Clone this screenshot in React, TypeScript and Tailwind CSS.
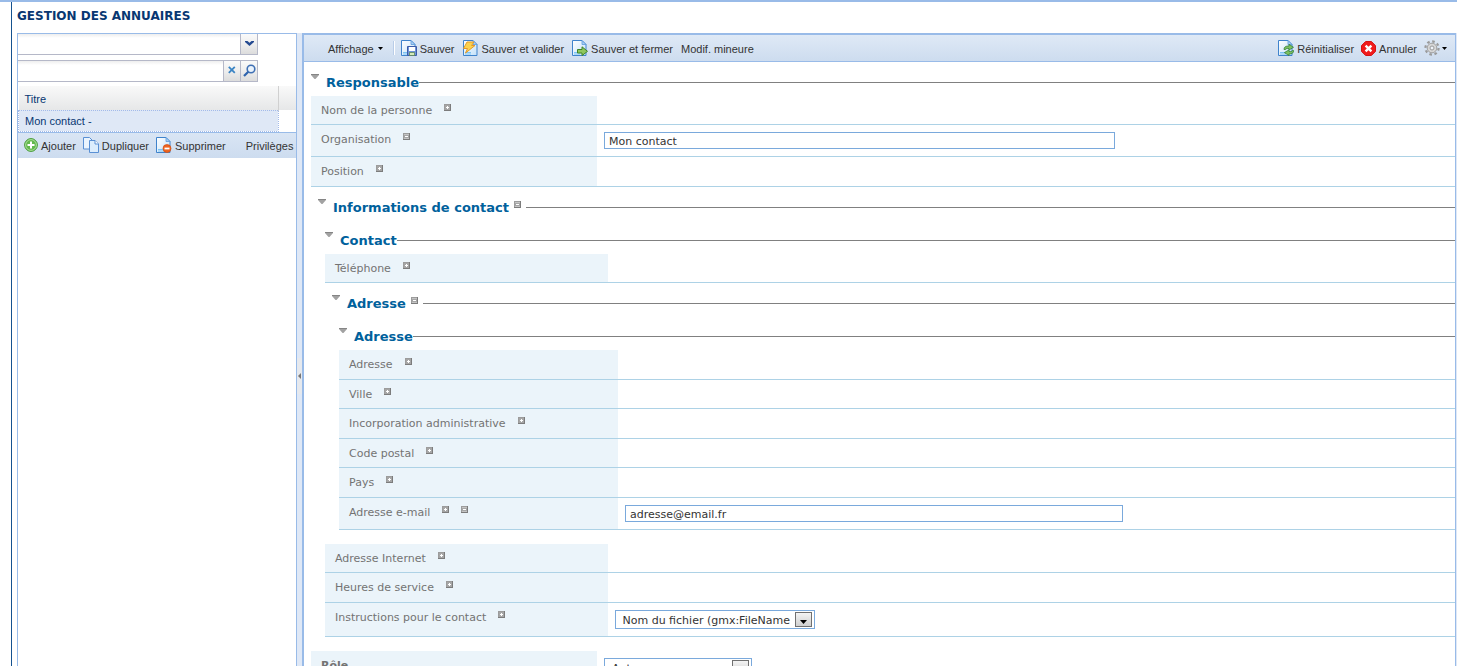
import type { ReactNode } from "react";

const verdana = "font-['Verdana','DejaVu_Sans',sans-serif]";
const arial = "font-['Liberation_Sans',Arial,sans-serif]";

function Page({ children }: { children?: ReactNode }) {
  return (
    <svg width="16" height="16" viewBox="0 0 16 16" className="shrink-0" aria-hidden="true">
      <defs>
        <linearGradient id="page" x1="0" y1="0" x2="1" y2="1">
          <stop offset="0" stopColor="#ffffff" />
          <stop offset="1" stopColor="#c3e1f9" />
        </linearGradient>
      </defs>
      <path d="M.5 .5h9.500l4 4v11H.5z" fill="url(#page)" stroke="#3f83cc" />
      <path d="M10 .5v4h4z" fill="#a9cff3" stroke="#5e9bdc" strokeWidth=".8" />
      <path d="M2 12.500h6M2 14h6" stroke="#7cc4f4" />
      {children}
    </svg>
  );
}

const SaveIcon = () => (
  <Page>
    <path d="M6.500 6.500h9v9h-9z" fill="#6f93d8" stroke="#3b5ba8" />
    <path d="M8 7h6v4H8z" fill="#fff" />
    <path d="M8.500 12.500h5v3h-5z" fill="#d5ecb9" stroke="#54804e" strokeWidth=".7" />
  </Page>
);

const ValidateIcon = () => (
  <Page>
    <path d="M4 2h7L8.500 5.500H12L2.500 13 4.500 8.500H.5z" fill="#fcd24e" stroke="#e39a2b" strokeWidth="1" />
  </Page>
);

const CloseSaveIcon = () => (
  <Page>
    <path d="M5.500 9.500h4.500V6.800l5.500 4.500-5.500 4.300v-2.600H5.500z" fill="#8fc75c" stroke="#3f8426" strokeWidth="1" />
  </Page>
);

const ResetIcon = () => (
  <Page>
    <path d="M6 9.500c0-2.500 1.500-3.500 5-3.500V4.300L15.500 7.300 11 10V8.500c-2 0-3 0-3.500 1z" fill="#7cc060" stroke="#348039" strokeWidth=".8" />
    <path d="M15.600 10.500c0 2.500-1.500 3.500-4.600 3.500v1.600l-4.600-3 4.600-2.700v1.600c2 0 3 0 3.500-1z" fill="#7cc060" stroke="#348039" strokeWidth=".8" />
  </Page>
);

const RemoveIcon = () => (
  <Page>
    <circle cx="11" cy="11.500" r="4" fill="#ee6420" stroke="#d04d12" strokeWidth=".7" />
    <path d="M8.500 11.500h5" stroke="#fff" strokeWidth="1.800" />
  </Page>
);

const AddIcon = () => (
  <svg width="14" height="14" viewBox="0 0 14 14" className="shrink-0" aria-hidden="true">
    <circle cx="7" cy="7" r="6.400" fill="#62b84d" stroke="#4a9c3c" />
    <circle cx="7" cy="7" r="5.400" fill="none" stroke="#b4e2a3" strokeWidth=".9" />
    <path d="M7 3.500v7M3.500 7h7" stroke="#fff" strokeWidth="2" />
  </svg>
);

const CopyIcon = () => (
  <svg width="16" height="16" viewBox="0 0 16 16" className="shrink-0" aria-hidden="true">
    <path d="M.5 .5h6l3 3v8.500h-9z" fill="#eaf4fe" stroke="#5a90d4" />
    <path d="M6.500 3.500h5.500l3.500 3.500v8.500h-9z" fill="#dcedfd" stroke="#5a90d4" />
    <path d="M12 3.500v3.500h3.500" fill="#fff" stroke="#5a90d4" />
  </svg>
);

const CancelIcon = () => (
  <svg width="15" height="15" viewBox="0 0 15 15" className="shrink-0" aria-hidden="true">
    <path d="M4.600.5h5.800l4.100 4.100v5.800l-4.100 4.100H4.600L.5 10.400V4.600z" fill="#f01c1c" stroke="#d41414" />
    <path d="M4.600 4.600l5.800 5.800M10.400 4.600l-5.800 5.800" stroke="#fff" strokeWidth="2.400" />
  </svg>
);

const GearIcon = () => (
  <svg width="16" height="16" viewBox="0 0 16 16" className="shrink-0" aria-hidden="true">
    <circle cx="8" cy="8" r="6.600" fill="none" stroke="#9a9a9a" strokeWidth="2.200" strokeDasharray="2.600 2.580" />
    <circle cx="8" cy="8" r="4.800" fill="#d6d6d6" stroke="#a0a0a0" />
    <circle cx="8" cy="8" r="2" fill="#eef3fa" stroke="#9a9a9a" />
  </svg>
);

const Caret = () => (
  <svg width="5" height="3" viewBox="0 0 5 3" className="shrink-0" aria-hidden="true">
    <path d="M0 0h5L2.500 3z" fill="#000" />
  </svg>
);

function ToolButton({ icon, label }: { icon?: ReactNode; label: string }) {
  return (
    <button type="button" className="flex shrink-0 items-center gap-[3px] whitespace-nowrap">
      {icon}
      <span className="pt-0.5">{label}</span>
    </button>
  );
}

function Toggle({ kind }: { kind: "plus" | "minus" }) {
  return (
    <button type="button" aria-label={kind === "plus" ? "Ajouter" : "Supprimer"} className="block shrink-0">
      <svg width="7" height="7" viewBox="0 0 7 7" shapeRendering="crispEdges" aria-hidden="true">
        <path d="M0 0h7v7H0z" fill="#7c7c7c" />
        <path d="M0 0h6v1H1v5H0z" fill="#9c9c9c" />
        <path d="M1 1h5v5H1z" fill="#a6a6a6" />
        <path d={kind === "plus" ? "M3 2h1v1h1v1H4v1H3V4H2V3h1z" : "M2 3h3v1H2z"} fill="#fff" />
        {kind === "minus" && <path d="M1 1h5v1H1zM1 5h5v1H1z" fill="#c4c4c4" />}
      </svg>
    </button>
  );
}

function Section({ title, toggle, className, children }: { title: string; toggle?: boolean; className: string; children: ReactNode }) {
  return (
    <section className={className}>
      <div className="mb-1 flex h-5 items-center">
        <button type="button" aria-label={`Replier ${title}`} className="mb-3 w-[15px] shrink-0">
          <svg width="8" height="5" viewBox="0 0 8 5" aria-hidden="true">
            <path d="M0 0h8v1L4.500 5h-1L0 1z" fill="#a2a2a2" />
            <path d="M0 0h8v1H0z" fill="#858585" />
          </svg>
        </button>
        <h2 className="pt-0.5 text-[13px] leading-[18px] font-bold whitespace-nowrap text-[#00619c]">{title}</h2>
        {toggle && (
          <span className="mx-[5px] mb-1.5">
            <Toggle kind="minus" />
          </span>
        )}
        <span className="h-px flex-1 bg-[#808080]" />
      </div>
      {children}
    </section>
  );
}

type RowProps = {
  label: string;
  id?: string;
  toggles?: ("plus" | "minus")[];
  height?: string;
  bold?: boolean;
  children?: ReactNode;
};

function Row({ label, id, toggles = ["plus"], height = "h-[29px]", bold, children }: RowProps) {
  return (
    <div className={`flex border-b border-[#add2e6] ${height}`}>
      <div className="flex w-1/4 shrink-0 items-start gap-3 bg-[#ebf4fa] pt-2 pl-2.5">
        {id ? (
          <label htmlFor={id} className={`leading-[14px] text-[#737373] ${bold ? "font-bold" : ""}`}>{label}</label>
        ) : (
          <span className="leading-[14px] text-[#737373]">{label}</span>
        )}
        {toggles.map((kind) => (
          <Toggle key={kind} kind={kind} />
        ))}
      </div>
      <div className="flex flex-1 items-start pt-[7px] pl-[7px]">{children}</div>
    </div>
  );
}

function TextField({ id, value }: { id: string; value: string }) {
  return <input id={id} type="text" defaultValue={value} className="h-[17px] w-3/5 border border-[#7aa9dc] bg-white px-1 pt-0.5 text-[#333]" />;
}

function SelectField({ id, value, width }: { id: string; value: string; width: string }) {
  return (
    <div className={`relative h-[19px] ${width}`}>
      <select id={id} className="h-full w-full appearance-none border border-[#7aa9dc] bg-white pt-0.5 pr-5 pl-[7px] text-[#333]">
        <option>{value}</option>
      </select>
      <span className="pointer-events-none absolute top-0.5 right-[3px] flex h-[15px] w-[17px] items-end justify-center border border-[#707070] bg-linear-to-b from-[#f4f4f4] to-[#cfcfcf] pb-0.5">
        <svg width="7" height="4" viewBox="0 0 7 4" aria-hidden="true">
          <path d="M0 0h7L3.500 4z" fill="#000" />
        </svg>
      </span>
    </div>
  );
}

const trigger = "flex h-[21px] w-[17px] items-center justify-center border-r border-b border-[#b5b8c8] bg-linear-to-b from-[#fafafa] via-[#eeeeee] to-[#dcdcdc]";

function Sidebar() {
  return (
    <aside className={`flex w-[280px] shrink-0 flex-col overflow-hidden border-x border-t border-[#99bbe8] text-[11px] ${arial}`}>
      <div className="flex w-[240px]">
        <input aria-label="Catalogue" className="h-[21px] min-w-0 flex-1 border-r border-b border-[#b5b8c8] bg-linear-to-b from-[#eeeeee] to-white to-20% px-1" />
        <button type="button" aria-label="Ouvrir la liste" className={trigger}>
          <svg width="9" height="5" viewBox="0 0 9 5" className="mb-0.5" aria-hidden="true">
            <path d="M0 0h2.500l2 1.800L6.500 0H9v1L4.500 5 0 1z" fill="#244a90" />
          </svg>
        </button>
      </div>
      <div className="mt-[5px] flex w-[240px] border-t border-[#b5b8c8]">
        <input aria-label="Rechercher" className="h-[21px] min-w-0 flex-1 border-r border-b border-[#b5b8c8] bg-linear-to-b from-[#eeeeee] to-white to-20% px-1" />
        <button type="button" aria-label="Effacer" className={trigger}>
          <svg width="8" height="8" viewBox="0 0 8 8" className="mb-0.5" aria-hidden="true">
            <path d="M.8 .8l6 6M6.800 .8l-6 6" stroke="#3b84c4" strokeWidth="1.800" />
          </svg>
        </button>
        <button type="button" aria-label="Lancer la recherche" className={trigger}>
          <svg width="13" height="13" viewBox="0 0 13 13" className="mb-0.5" aria-hidden="true">
            <circle cx="8" cy="5" r="3.800" fill="#eaf3fc" stroke="#3f70b4" strokeWidth="1.600" />
            <path d="M5.300 7.700L1 12" stroke="#2f64ae" strokeWidth="2.200" />
          </svg>
        </button>
      </div>
      <table className="mt-1 w-full border-collapse text-left text-[#083772]">
        <thead>
          <tr className="h-6 bg-linear-to-b from-[#f9f9f9] to-[#e6e7e8]">
            <th className="border-r border-[#d0d0d0] pt-0.5 pl-1.5 font-normal">Titre</th>
            <td className="w-[18px]" />
          </tr>
        </thead>
        <tbody>
          <tr className="h-[21px]">
            <td className="border border-dotted border-[#a3bae9] bg-[#dfe8f6] pt-0.5 pl-1.5">Mon contact -</td>
            <td />
          </tr>
        </tbody>
      </table>
      <div className="flex h-[26px] shrink-0 items-center border-t border-[#99bbe8] bg-linear-to-b from-[#d9e5f4] to-[#cddcef] pl-1.5 text-[#333]">
        <div className="flex gap-[7px]">
          <ToolButton icon={<AddIcon />} label="Ajouter" />
          <ToolButton icon={<CopyIcon />} label="Dupliquer" />
          <ToolButton icon={<RemoveIcon />} label="Supprimer" />
        </div>
        <div className="ml-5">
          <ToolButton label="Privilèges" />
        </div>
      </div>
    </aside>
  );
}

function Toolbar() {
  return (
    <div className={`flex h-[27px] shrink-0 items-center justify-between border-b border-[#99bbe8] bg-linear-to-b from-[#dfe9f6] to-[#cddcef] pr-2 text-[11px] text-[#333] ${arial}`}>
      <div className="flex items-center gap-2 pl-6">
        <button type="button" className="flex items-center gap-1">
          <span className="pt-0.5">Affichage</span>
          <Caret />
        </button>
        <span className="-mr-0.5 ml-0.5 h-3.5 w-0.5 border-r border-white bg-[#b9cde8]" />
        <ToolButton icon={<SaveIcon />} label="Sauver" />
        <ToolButton icon={<ValidateIcon />} label="Sauver et valider" />
        <ToolButton icon={<CloseSaveIcon />} label="Sauver et fermer" />
        <ToolButton label="Modif. mineure" />
      </div>
      <div className="flex items-center gap-[7px]">
        <ToolButton icon={<ResetIcon />} label="Réinitialiser" />
        <ToolButton icon={<CancelIcon />} label="Annuler" />
        <button type="button" aria-label="Options" className="flex items-center gap-0.5">
          <GearIcon />
          <Caret />
        </button>
      </div>
    </div>
  );
}

function Editor() {
  return (
    <form className={`min-h-0 flex-1 overflow-hidden pt-2.5 pl-[7px] text-[11px] ${verdana}`}>
      <Section title="Responsable" className="">
        <Row label="Nom de la personne" />
        <Row label="Organisation" id="organisation" toggles={["minus"]} height="h-8">
          <TextField id="organisation" value="Mon contact" />
        </Row>
        <Row label="Position" height="h-[30px]" />
        <Section title="Informations de contact" toggle className="mt-2.5 pl-[7px]">
          <div className="pl-[7px]">
            <Section title="Contact" className="mt-[13px]">
              <Row label="Téléphone" />
              <Section title="Adresse" toggle className="mt-2.5 pl-[7px]">
                <Section title="Adresse" className="mt-[13px] pl-[7px]">
                  <Row label="Adresse" height="h-[30px]" />
                  <Row label="Ville" />
                  <Row label="Incorporation administrative" height="h-[30px]" />
                  <Row label="Code postal" />
                  <Row label="Pays" height="h-[30px]" />
                  <Row label="Adresse e-mail" id="email" toggles={["plus", "minus"]} height="h-8">
                    <TextField id="email" value="adresse@email.fr" />
                  </Row>
                </Section>
              </Section>
              <div className="mt-3.5">
                <Row label="Adresse Internet" />
                <Row label="Heures de service" height="h-[30px]" />
                <Row label="Instructions pour le contact" id="instructions" height="h-[34px]">
                  <SelectField id="instructions" value="Nom du fichier (gmx:FileName" width="w-[200px]" />
                </Row>
              </div>
            </Section>
          </div>
        </Section>
        <div className="mt-3.5">
          <Row label="Rôle" id="role" toggles={[]} height="h-[34px]" bold>
            <SelectField id="role" value="Auteur" width="w-[148px]" />
          </Row>
        </div>
      </Section>
    </form>
  );
}

export default function App() {
  return (
    <div className="flex h-screen overflow-hidden border-t-2 border-[#99bbe8] bg-white pl-[11px]">
      <div className="flex min-w-0 flex-1 flex-col border-l border-[#15528f] pl-[5px]">
        <h1 className="flex h-[31px] shrink-0 items-start pt-1.5 font-['DejaVu_Sans',sans-serif] text-[12px] leading-4 font-bold text-[#083772]">
          GESTION DES ANNUAIRES
        </h1>
        <div className="flex min-h-0 flex-1">
          <Sidebar />
          <div className="flex w-[5px] shrink-0 items-center justify-center bg-[#dfe8f6] pt-[52px]">
            <button type="button" aria-label="Réduire le panneau" className="flex h-9 w-[5px] items-center justify-center bg-[#e6e9ee]">
              <svg width="3" height="6" viewBox="0 0 3 6" aria-hidden="true">
                <path d="M3 0v6L0 3z" fill="#777" />
              </svg>
            </button>
          </div>
          <main className="flex min-w-0 flex-1 flex-col overflow-hidden border-t-2 border-r border-l-2 border-[#99bbe8]">
            <Toolbar />
            <Editor />
          </main>
          <div className="w-px shrink-0 bg-[#dfe8f6]" />
        </div>
      </div>
    </div>
  );
}
